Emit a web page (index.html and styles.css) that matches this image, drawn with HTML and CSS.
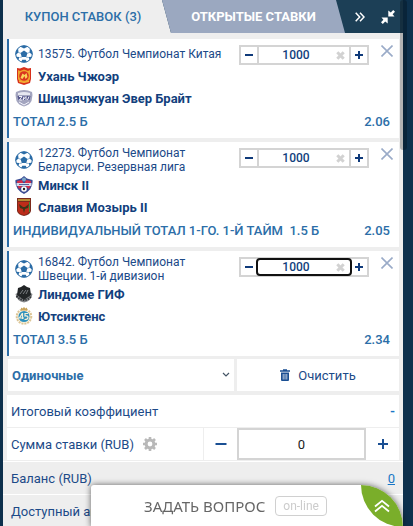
FILE: index.html
```
<!DOCTYPE html>
<html lang="ru">
<head>
    <meta charset="UTF-8">
    <meta name="viewport" content="width=device-width, initial-scale=1.0">
    <title>Купон ставок</title>
    <link rel="stylesheet" href="styles.css">
</head>
<body>

    <svg class="sprite" aria-hidden="true">
        <symbol id="ball" viewBox="0 0 18 18">
            <circle cx="9" cy="9" r="8.3" fill="#fff" stroke="#2b6ca6" stroke-width="1"/>
            <path d="M9 5.500l3.500 2.500-1.300 4H6.800L5.500 8zM5 1.500L9 3.600l4-2.100L9 .4zM.5 10l3-2.600-.4-4L1 6zM17.500 10l-3-2.600.4-4L17 6zM3.200 15.300l1.200-3.200-3.400-.4zM14.800 15.300l-1.200-3.200 3.400-.4zM6.300 17.200l.9-2.400h3.600l.9 2.400z" fill="#2b6ca6"/>
            <path d="M3.200 7.300l2.500 1M14.800 7.300l-2.500 1M7 12l-2.500.5M11 12l2.500.5" stroke="#2b6ca6" stroke-width=".5"/>
        </symbol>
        <symbol id="cross" viewBox="0 0 12 12">
            <path d="M.5.5l11 11M11.5.5l-11 11" stroke="#9aabc8" stroke-width="1.6"/>
        </symbol>
        <symbol id="wipe" viewBox="0 0 9 9">
            <path d="M1.300 1.300l6.400 6.400M7.700 1.300L1.300 7.700" stroke="#d2d2d2" stroke-width="3"/>
        </symbol>
        <symbol id="minus" viewBox="0 0 12 12">
            <path d="M2 6h8" stroke="#0f3a7a" stroke-width="2"/>
        </symbol>
        <symbol id="plus" viewBox="0 0 12 12">
            <path d="M2 6h8M6 2v8" stroke="#0f3a7a" stroke-width="2"/>
        </symbol>
    </svg>

    <div class="coupon">
        <div class="tabs">
            <button class="tab tab-active">КУПОН СТАВОК (3)</button>
            <button class="tab tab-open">ОТКРЫТЫЕ СТАВКИ</button>
            <div class="tab-tools">
                <button class="tool" aria-label="Скрыть">
                    <svg width="10" height="10" viewBox="0 0 10 10"><path d="M.7.8L4.700 5l-4 4.200M5 .8L9 5 5 9.200" fill="none" stroke="#fff" stroke-width="1.5"/></svg>
                </button>
                <button class="tool" aria-label="Свернуть">
                    <svg width="14" height="14" viewBox="0 0 14 14"><path d="M14 1.800L11.600 4.200 13.500 6.500H7.300V.5L9.800 2.400 12.200 0zM0 12.200L2.400 9.800 .5 7.500H6.700v6L4.200 11.600 1.800 14z" fill="#fff"/></svg>
                </button>
            </div>
        </div>

        <div class="bets">
            <div class="bet">
                <div class="bet-info">
                    <div class="league"><svg class="icon"><use href="#ball"/></svg><span>13575. Футбол Чемпионат Китая</span></div>
                    <div class="team">
                        <svg class="icon" viewBox="0 0 18 18"><path d="M2 1l3 .5L9 0l4 1.5L16 1v11l-1 4-6 2-6-2-1-4z" fill="#d8301c"/><path d="M3 3l2 1 4-1.500L13 4l2-1v9l-2 3H5l-2-3z" fill="#f0a52c"/><circle cx="9" cy="9" r="4.800" fill="#d9341f"/><path d="M5.500 11l2-4.500 2 1.500 2-2 1 4-2 2-1-3-2 3z" fill="#fbd45a"/><path d="M4 14.500q5 2 10 0" stroke="#f6b73c" fill="none"/></svg>
                        <span>Ухань Чжоэр</span>
                    </div>
                    <div class="team">
                        <svg class="icon" viewBox="0 0 18 18"><path d="M1 3q8-4 16 0l.5 3-1 6q-2 4-7.500 5.500Q3.500 16 1.500 12L.5 6z" fill="#a3a5bf"/><path d="M3 4q6-2 12 0v2H3z" fill="#e6e7f1"/><path d="M2.500 7h13l-1 4h-11z" fill="#54568a"/><path d="M4 7.500h3L4.500 11H7M9 7.500L8 11l3-3.500V11M14 7.500L12.500 11M4 13l5 3 5-3" stroke="#f2f2fa" fill="none"/></svg>
                        <span>Шицзячжуан Эвер Брайт</span>
                    </div>
                </div>
                <div class="stepper">
                    <button class="step" aria-label="Меньше"><svg><use href="#minus"/></svg></button>
                    <input class="stake" type="text" value="1000" aria-label="Сумма ставки 13575">
                    <button class="wipe" aria-label="Стереть"><svg><use href="#wipe"/></svg></button>
                    <button class="step" aria-label="Больше"><svg><use href="#plus"/></svg></button>
                </div>
                <button class="remove" aria-label="Удалить"><svg><use href="#cross"/></svg></button>
                <div class="outcome"><span>ТОТАЛ 2.5 Б</span><span>2.06</span></div>
            </div>

            <div class="bet">
                <div class="bet-info">
                    <div class="league"><svg class="icon"><use href="#ball"/></svg><span>12273. Футбол Чемпионат<br>Беларуси. Резервная лига</span></div>
                    <div class="team">
                        <svg class="icon" viewBox="0 0 18 18"><path d="M.5 4L6 2.500 9 0l3 2.500L17.500 4q1 9-8.500 14Q-.5 13 .5 4z" fill="#3a4c93"/><path d="M2 5l5-1 2 5-5 4Q2 10 2 5zM16 5l-5-1-2 5 5 4q2-3 2-8z" fill="#d52f4c"/><path d="M1.500 7h15v3h-15z" fill="#d5daea"/><path d="M4 8.500h10" stroke="#5262a0"/><circle cx="9" cy="3.500" r="2" fill="#7aa6c8"/><circle cx="9" cy="13" r="2.800" fill="#fff"/><circle cx="9" cy="13" r="1.200" fill="#222"/></svg>
                        <span>Минск II</span>
                    </div>
                    <div class="team">
                        <svg class="icon" viewBox="0 0 18 18"><path d="M2 0h14v13q-1 4-7 5-6-1-7-5z" fill="#7c2a1c"/><path d="M3 4h12v9q-2 3-6 4-5-1-6-4z" fill="#bd2c1a"/><path d="M3 1h12v2H3z" fill="#b68a34"/><path d="M4 6l4 3h2l4-3-1 4-3 1-1 4-1-4-3-1z" fill="#3b3517"/><path d="M14.500 4v10" stroke="#418a3a"/></svg>
                        <span>Славия Мозырь II</span>
                    </div>
                </div>
                <div class="stepper">
                    <button class="step" aria-label="Меньше"><svg><use href="#minus"/></svg></button>
                    <input class="stake" type="text" value="1000" aria-label="Сумма ставки 12273">
                    <button class="wipe" aria-label="Стереть"><svg><use href="#wipe"/></svg></button>
                    <button class="step" aria-label="Больше"><svg><use href="#plus"/></svg></button>
                </div>
                <button class="remove" aria-label="Удалить"><svg><use href="#cross"/></svg></button>
                <div class="outcome"><span>ИНДИВИДУАЛЬНЫЙ ТОТАЛ 1-ГО. 1-Й ТАЙМ&nbsp; 1.5 Б</span><span>2.05</span></div>
            </div>

            <div class="bet">
                <div class="bet-info">
                    <div class="league"><svg class="icon"><use href="#ball"/></svg><span>16842. Футбол Чемпионат<br>Швеции. 1-й дивизион</span></div>
                    <div class="team">
                        <svg class="icon" viewBox="0 0 18 18"><path d="M.5 9q2-2 8.500-2t8.500 2q-1 7-8.500 8.500Q1.500 16 .5 9z" fill="#85878a"/><path d="M3 3l3-1 3-2 3 2 3 1 1 7-7 5-7-5z" fill="#222527"/><path d="M5 9l3-4M8 9l3-4M11 9l2-4" stroke="#7b7e82"/><path d="M1.500 11q7.500 8 15 0" stroke="#303336" stroke-width="2" stroke-dasharray="1.5 1" fill="none"/></svg>
                        <span>Линдоме ГИФ</span>
                    </div>
                    <div class="team">
                        <svg class="icon" viewBox="0 0 18 18"><circle cx="9" cy="9.500" r="7.300" fill="#f7f1df" stroke="#dcc596" stroke-width="2" stroke-dasharray="2 1"/><path d="M6 .5l1.500 1L9 0l1.500 1.500L12 .5v3H6z" fill="#c9a45c"/><circle cx="9" cy="9.500" r="5.500" fill="#2f91bd"/><path d="M7.500 6l-3 5h4.500M7.500 6v6M13 6.500h-3V9q3-.5 3 1.500T9.500 12.500" stroke="#f5efd8" stroke-width="1.2" fill="none"/></svg>
                        <span>Ютсиктенс</span>
                    </div>
                </div>
                <div class="stepper">
                    <button class="step" aria-label="Меньше"><svg><use href="#minus"/></svg></button>
                    <input class="stake stake-active" type="text" value="1000" aria-label="Сумма ставки 16842">
                    <button class="wipe" aria-label="Стереть"><svg><use href="#wipe"/></svg></button>
                    <button class="step" aria-label="Больше"><svg><use href="#plus"/></svg></button>
                </div>
                <button class="remove" aria-label="Удалить"><svg><use href="#cross"/></svg></button>
                <div class="outcome"><span>ТОТАЛ 3.5 Б</span><span>2.34</span></div>
            </div>
        </div>

        <div class="actions">
            <select class="kind" aria-label="Тип купона">
                <option>Одиночные</option>
            </select>
            <button class="clear-btn">
                <svg width="10" height="12" viewBox="0 0 10 12"><path d="M0 2h10M3 1h4" stroke="#1a4f93" stroke-width="1.5"/><path d="M1 3.500h8V11q0 1-1 1H2q-1 0-1-1z" fill="#1a4f93"/><path d="M3.200 5v5.500M5 5v5.500M6.800 5v5.500" stroke="#dfe7f2" stroke-width=".8"/></svg>
                Очистить
            </button>
        </div>

        <div class="summary">
            <div class="row">
                <span>Итоговый коэффициент</span>
                <span class="coef">-</span>
            </div>
            <div class="row row-sum">
                <label class="sum-label" for="sum">Сумма ставки (RUB)
                    <svg width="14" height="14" viewBox="0 0 14 14"><circle cx="7" cy="7" r="3.900" fill="none" stroke="#b9b9b9" stroke-width="3"/><path d="M7 0v2.500M7 11.500V14M0 7h2.500M11.500 7H14M2 2l2 2M10 10l2 2M2 12l2-2M10 4l2-2" stroke="#b9b9b9" stroke-width="2.6"/></svg>
                </label>
                <button class="sum-step" aria-label="Меньше"><svg width="12" height="12" viewBox="0 0 12 12"><path d="M.5 6h11" stroke="#1a4f93" stroke-width="2"/></svg></button>
                <input class="sum-input" id="sum" type="text" value="0">
                <button class="sum-step" aria-label="Больше"><svg width="12" height="12" viewBox="0 0 12 12"><path d="M1 6h10M6 1v10" stroke="#1a4f93" stroke-width="2"/></svg></button>
            </div>
        </div>

        <div class="balance">
            <div class="balance-row"><span>Баланс (RUB)</span><a href="#">0</a></div>
            <div class="balance-row"><span>Доступный аванс</span></div>
        </div>
    </div>

    <div class="scroll-thumb"></div>

    <div class="chat">
        <span class="chat-title">ЗАДАТЬ ВОПРОС</span>
        <span class="chat-status">on-line</span>
        <button class="chat-open" aria-label="Открыть">
            <svg width="16" height="14" viewBox="0 0 16 14"><path d="M1 7.500L8 1.800l7 5.700M1 12.500L8 6.800l7 5.700" fill="none" stroke="#fff" stroke-width="1.8"/></svg>
        </button>
    </div>

</body>
</html>
```
FILE: styles.css
```
* {
    box-sizing: border-box;
}

body {
    margin: 0;
    height: 100vh;
    overflow: hidden;
    padding: 0 10px 0 3px;
    background-color: #0d304c;
    font-family: Roboto, sans-serif;
    font-size: 13px;
    color: #1c4a88;
}

button,
input,
select {
    font-family: inherit;
    font-size: 13px;
    margin: 0;
    padding: 0;
    border: none;
    background: none;
    border-radius: 0;
    color: inherit;
}

button {
    display: flex;
    align-items: center;
    justify-content: center;
    flex-shrink: 0;
    cursor: pointer;
}

.sprite {
    display: none;
}

.coupon {
    background-color: #eee;
    height: 100%;
}

/* tabs */
.tabs {
    display: flex;
    height: 33px;
    background-color: #1c3f56;
}

.tab {
    font-weight: 500;
}

.tab-active {
    flex: 0 0 42%;
    padding-right: 8px;
    background-color: #eee;
    color: #2c6ea8;
    clip-path: polygon(0 0, calc(100% - 9px) 0, 100% 100%, 0 100%);
}

.tab-open {
    flex: 1;
    margin-left: -9px;
    background-color: #9ba8c0;
    color: #fff;
    font-weight: 700;
    clip-path: polygon(0 0, calc(100% - 9px) 0, 100% 100%, 9px 100%);
}

.tab-tools {
    display: flex;
    flex: 0 0 58px;
    align-items: center;
    justify-content: space-between;
    padding: 0 8px 0 10px;
}

/* bets */
.bets {
    display: flex;
    flex-direction: column;
    gap: 4px;
    padding: 6px 4px 0;
}

.bet {
    display: grid;
    grid-template-columns: 1fr 130px 30px;
    align-items: start;
    background-color: #fff;
    border-left: 2px solid #2b6ca6;
    padding: 3px 0;
}

.bet-info {
    padding-left: 6px;
}

.icon {
    width: 18px;
    height: 18px;
    flex-shrink: 0;
}

.league,
.team {
    display: flex;
    align-items: center;
    gap: 5px;
}

.league {
    min-height: 23px;
    padding-top: 1px;
    font-size: 12px;
    line-height: 14px;
}

.team {
    height: 22px;
    font-weight: 700;
    color: #123f7d;
    white-space: nowrap;
}

.stepper {
    display: flex;
    height: 20px;
    margin-top: 3px;
    border: 2px solid #d4d4d4;
}

.step {
    width: 16px;
    height: 16px;
}

.step svg {
    width: 12px;
    height: 12px;
}

.stake {
    flex: 1;
    min-width: 0;
    height: 16px;
    padding-right: 16px;
    border: solid #d4d4d4;
    border-width: 0 2px;
    font-size: 12px;
    font-weight: 500;
    text-align: center;
    color: #123f7d;
}

.stake:focus,
.stake-active {
    border-color: #fff;
    border-radius: 3px;
    outline: 2px solid #111;
    outline-offset: -1px;
}

.wipe {
    width: 22px;
    height: 16px;
    margin-left: -22px;
}

.wipe svg {
    width: 9px;
    height: 9px;
}

.remove {
    justify-self: center;
    margin-top: 3px;
    margin-left: 6px;
}

.remove svg {
    width: 12px;
    height: 12px;
}

.outcome {
    grid-column: 1 / -1;
    display: flex;
    justify-content: space-between;
    height: 26px;
    line-height: 26px;
    padding: 0 9px 0 4px;
    font-weight: 500;
    color: #2c6ea8;
}

/* actions */
.actions {
    display: grid;
    grid-template-columns: 226px 1fr;
    gap: 3px;
    height: 32px;
    margin: 3px 4px 4px 5px;
}

.kind {
    appearance: none;
    padding-left: 4px;
    background: #fff url("data:image/svg+xml,%3Csvg xmlns='http://www.w3.org/2000/svg' width='8' height='6'%3E%3Cpath d='M1 1l3 3 3-3' fill='none' stroke='%23456' stroke-width='1.2'/%3E%3C/svg%3E") no-repeat right 4px center;
    font-weight: 700;
    color: #2c6ea8;
}

.clear-btn {
    gap: 8px;
    background-color: #fff;
}

/* summary */
.summary {
    margin: 0 4px;
    background-color: #fff;
}

.row {
    display: flex;
    align-items: center;
    justify-content: space-between;
    height: 33px;
    padding: 0 4px;
    border-bottom: 1px solid #eee;
}

.coef {
    font-weight: 700;
    color: #1976c5;
}

.row-sum {
    padding: 0;
}

.sum-label {
    flex: 1;
    display: flex;
    align-items: center;
    gap: 9px;
    height: 100%;
    padding-left: 4px;
    border-right: 1px solid #eee;
}

.sum-step {
    width: 33px;
    height: 32px;
}

.sum-input {
    width: 129px;
    height: 32px;
    border: 2px solid #d4d4d4;
    text-align: center;
    color: #222;
}

/* balance */
.balance-row {
    display: flex;
    align-items: center;
    justify-content: space-between;
    height: 33px;
    padding: 0 8px;
    border-top: 1px solid #fff;
}

.balance-row a {
    color: #1976c5;
}

.scroll-thumb {
    position: fixed;
    top: 0;
    right: 6px;
    width: 7px;
    height: 150px;
    border-radius: 3px;
    background-color: rgba(0, 0, 0, 0.25);
}

/* chat */
.chat {
    position: fixed;
    right: 10px;
    bottom: -1px;
    left: 91px;
    display: flex;
    align-items: center;
    height: 42px;
    padding-left: 53px;
    border-radius: 3px 42px 0 0;
    background-color: #fff;
    box-shadow: 0 0 6px rgba(0, 0, 0, 0.6);
}

.chat-title {
    font-family: "Noto Sans", sans-serif;
    font-size: 15px;
    color: #666;
    white-space: nowrap;
}

.chat-status {
    margin-left: 10px;
    padding: 0 7px;
    border: 1px solid #d0d0d0;
    border-radius: 4px;
    font-size: 12px;
    line-height: 18px;
    color: #ccc;
}

.chat-open {
    width: 42px;
    height: 42px;
    margin-left: auto;
    border-radius: 0 42px 0 42px;
    background-color: #7aae2a;
}
```
